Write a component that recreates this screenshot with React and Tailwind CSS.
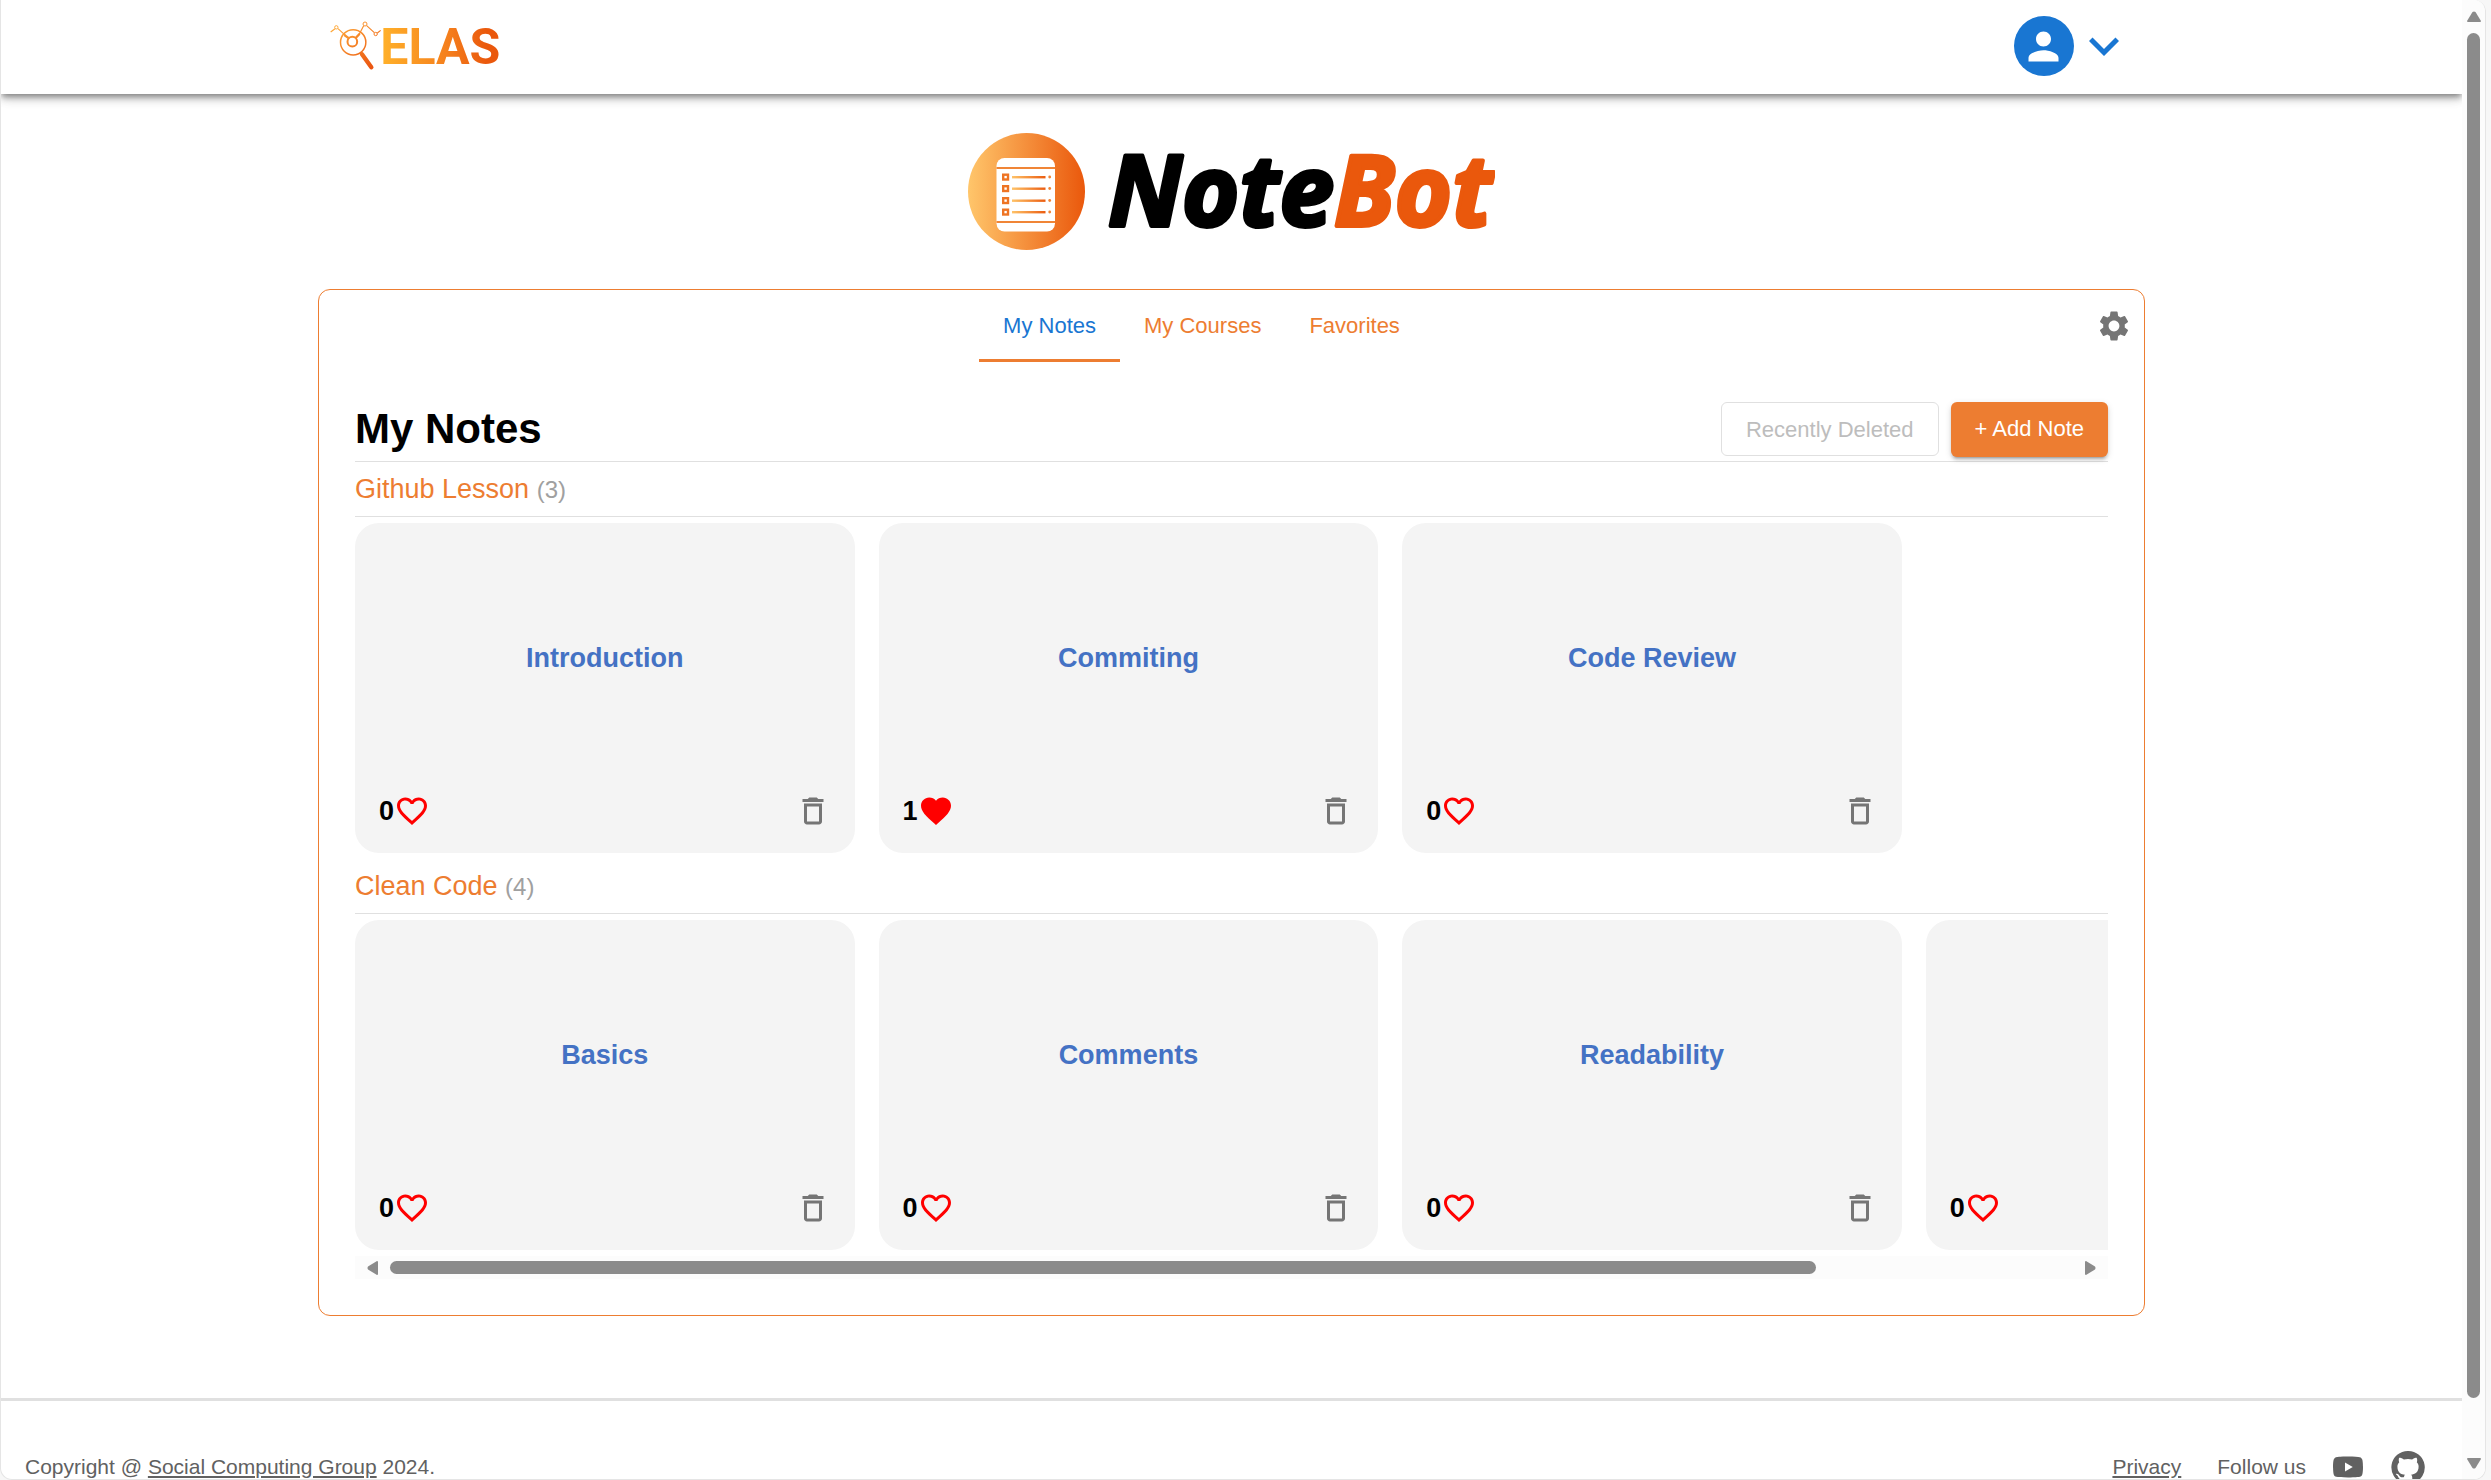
import React from "react";
import {
  MdPerson,
  MdKeyboardArrowDown,
  MdSettings,
  MdFavorite,
  MdFavoriteBorder,
  MdDeleteOutline,
} from "react-icons/md";

const sections = [
  {
    name: "Github Lesson",
    notes: [
      { title: "Introduction", likes: 0 },
      { title: "Commiting", likes: 1 },
      { title: "Code Review", likes: 0 },
    ],
  },
  {
    name: "Clean Code",
    scroll: true,
    notes: [
      { title: "Basics", likes: 0 },
      { title: "Comments", likes: 0 },
      { title: "Readability", likes: 0 },
      { title: "", likes: 0 },
    ],
  },
];

function ElasLogo() {
  return (
    <svg viewBox="88 30 540 216" className="h-[72px] w-[180px]" role="img" aria-label="ELAS">
      <defs>
        <linearGradient id="elasText" gradientUnits="userSpaceOnUse" x1="247" y1="0" x2="595" y2="0">
          <stop offset="0" stopColor="#ffb02a" />
          <stop offset="0.55" stopColor="#f5801d" />
          <stop offset="0.9" stopColor="#ea580c" />
        </linearGradient>
        <linearGradient id="elasIcon" gradientUnits="userSpaceOnUse" x1="110" y1="70" x2="215" y2="205">
          <stop offset="0" stopColor="#ffac3a" />
          <stop offset="1" stopColor="#ea5410" />
        </linearGradient>
      </defs>
      <g fill="none" stroke="url(#elasIcon)" strokeWidth="4">
        <circle cx="157.500" cy="127" r="38" strokeWidth="4.500" />
        <circle cx="155" cy="125" r="14.500" strokeWidth="6" />
        <circle cx="107" cy="82" r="5" strokeWidth="3" />
        <circle cx="193" cy="72" r="6" strokeWidth="3" />
        <circle cx="225" cy="102" r="5" strokeWidth="3" />
        <path d="M90 96l13-10M112 86l23 21M176 102l13-25M198 77l23 21M230 99l10-8" strokeWidth="3.500" />
        <path d="M131 105l15 11M165 114l12-13" strokeWidth="7" />
        <path d="M179 157l7 10" strokeWidth="8" />
        <path d="M184 163l28 39" strokeWidth="13" strokeLinecap="round" />
      </g>
      <text x="239" y="191" fontFamily="Roboto, sans-serif" fontWeight="700" fontSize="150" fill="url(#elasText)">
        ELAS
      </text>
    </svg>
  );
}

function NoteBotLogo() {
  return (
    <svg viewBox="968 113 527 157" className="h-[157px] w-[527px]" role="img" aria-label="NoteBot">
      <defs>
        <linearGradient id="disc" x1="0" x2="1" y1="0" y2="0">
          <stop offset="0" stopColor="#ffc66b" />
          <stop offset="1" stopColor="#ea580c" />
        </linearGradient>
        <linearGradient id="rule" gradientUnits="userSpaceOnUse" x1="1011" x2="1047" y1="0" y2="0">
          <stop offset="0" stopColor="#ffc66b" />
          <stop offset="1" stopColor="#ea580c" />
        </linearGradient>
      </defs>
      <circle cx="1026.500" cy="191.500" r="58.500" fill="url(#disc)" />
      <rect x="996.500" y="158" width="58.500" height="73.500" rx="8" fill="#fff" />
      <rect x="996.500" y="167" width="58.500" height="2" fill="#f08536" />
      <rect x="996.500" y="221" width="58.500" height="2" fill="#f08536" />
      {[177, 188.5, 200.5, 212].map((y) => (
        <g key={y}>
          <rect x="1003.200" y={y - 2.3} width="4.800" height="4.800" fill="#fff" stroke="#ee7424" strokeWidth="2.400" />
          <rect x="1012" y={y - 1} width="33.500" height="2.400" fill="url(#rule)" />
          <circle cx="1049.700" cy={y} r="1.400" fill="#f08536" />
        </g>
      ))}
      <g
        fontFamily="'Open Sans', sans-serif"
        fontWeight="700"
        fontStyle="italic"
        fontSize="98"
        strokeWidth="4"
        strokeLinejoin="round"
      >
        <text x="1108" y="226" fill="#000" stroke="#000">
          Note
        </text>
        <text x="1334" y="226" fill="#ea580c" stroke="#ea580c">
          Bot
        </text>
      </g>
    </svg>
  );
}

function NoteCard({ title, likes }) {
  return (
    <article className="flex h-[330px] w-[28.5%] shrink-0 flex-col rounded-[24px] bg-[#f4f4f4] px-6 pb-6">
      <h3 className="mt-[119px] text-center text-[27px] leading-8 font-bold text-[#4472c4]">{title}</h3>
      <div className="mt-auto flex items-center justify-between">
        <div className="flex items-center text-[27px] leading-9 font-bold">
          {likes}
          <button type="button" aria-label={"Like " + title} className="text-[#ff0000]">
            {likes > 0 ? <MdFavorite size={36} /> : <MdFavoriteBorder size={36} />}
          </button>
        </div>
        <button type="button" aria-label={"Delete " + title} className="text-[#757575]">
          <MdDeleteOutline size={36} />
        </button>
      </div>
    </article>
  );
}

function HorizontalScrollbar() {
  return (
    <div className="flex h-[23px] items-center bg-[#fcfcfc] px-3" aria-hidden="true">
      <svg viewBox="0 0 11 14" className="h-[14px] w-[11px] fill-[#8b8b8b]">
        <path d="M10 0q1 0 1 1v12q0 1-1 1L1 8.500q-1-1.500 0-3z" />
      </svg>
      <div className="mx-3 flex flex-1">
        <div className="h-[13px] w-[84.7%] rounded-full bg-[#8b8b8b]" />
      </div>
      <svg viewBox="0 0 11 14" className="h-[14px] w-[11px] fill-[#8b8b8b]">
        <path d="M1 0Q0 0 0 1v12q0 1 1 1l9-5.500q1-1.500 0-3z" />
      </svg>
    </div>
  );
}

function VerticalScrollbar() {
  return (
    <div className="flex w-[23px] shrink-0 flex-col items-center bg-[#fcfcfc] pt-[11px] pb-[10px]" aria-hidden="true">
      <svg viewBox="0 0 14 11" className="h-[11px] w-[14px] fill-[#8b8b8b]">
        <path d="M0 10q0 1 1 1h12q1 0 1-1L8.500 1q-1.500-1-3 0z" />
      </svg>
      <div className="my-[11px] flex-1">
        <div className="h-[96.5%] w-[13px] rounded-full bg-[#8b8b8b]" />
      </div>
      <svg viewBox="0 0 14 11" className="h-[11px] w-[14px] fill-[#8b8b8b]">
        <path d="M0 1q0-1 1-1h12q1 0 1 1l-5.500 9q-1.500 1-3 0z" />
      </svg>
    </div>
  );
}

const tabs = ["My Notes", "My Courses", "Favorites"];

export default function App() {
  return (
    <div className="h-screen overflow-hidden bg-[#f7f7f7] pr-[5px] font-['Liberation_Sans',Arial,sans-serif] text-black">
      <div className="flex h-full overflow-hidden rounded-r-[12px] rounded-bl-[12px] border-x border-b border-[#e5e5e5] bg-white">
        <div className="min-w-0 flex-1 overflow-hidden">
          <header className="relative h-[94px] bg-white shadow-[0_3px_6px_-1px_rgba(0,0,0,0.4),0_6px_8px_0_rgba(0,0,0,0.14),0_1px_15px_0_rgba(0,0,0,0.12)]">
            <div className="mx-auto flex h-full max-w-[1804px] items-center justify-between pb-0.5">
              <a href="#home">
                <ElasLogo />
              </a>
              <button type="button" aria-label="Account menu" className="flex items-center text-[#1976d2]">
                <span className="flex h-[60px] w-[60px] items-center justify-center rounded-full bg-[#1976d2] text-white">
                  <MdPerson size={45} />
                </span>
                <MdKeyboardArrowDown size={60} />
              </button>
            </div>
          </header>

          <main>
            <h1 className="flex justify-center py-[19px]">
              <NoteBotLogo />
            </h1>

            <section className="mx-auto max-w-[1827px] rounded-[12px] border border-[#ed7d31]">
              <div className="flex h-[72px] items-center">
                <nav className="flex h-full flex-1 justify-center">
                  {tabs.map((t, i) => (
                    <button
                      key={t}
                      type="button"
                      className={
                        i === 0
                          ? "h-full border-b-[3px] border-[#ed7d31] px-6 pt-0.5 text-[22px] text-[#1976d2]"
                          : "h-full border-b-[3px] border-transparent px-6 pt-0.5 text-[22px] text-[#ed7d31]"
                      }
                    >
                      {t}
                    </button>
                  ))}
                </nav>
                <button type="button" aria-label="Settings" className="flex w-[60px] justify-center text-[#757575]">
                  <MdSettings size={36} />
                </button>
              </div>

              <div className="px-9 pt-10 pb-9">
                <div className="flex h-[60px] items-start justify-between border-b border-[#e0e0e0]">
                  <h2 className="text-[42px] leading-[54px] font-bold">My Notes</h2>
                  <div className="flex items-start gap-3">
                    <button
                      type="button"
                      disabled
                      className="h-[54px] rounded-md border border-[#e0e0e0] px-6 text-[22px] text-[#bdbdbd]"
                    >
                      Recently Deleted
                    </button>
                    <button
                      type="button"
                      className="h-[55px] rounded-md bg-[#ed7d31] px-6 pb-0.5 text-[22px] text-white shadow-[0_4px_2px_-3px_rgba(0,0,0,0.2),0_3px_3px_0_rgba(0,0,0,0.14),0_2px_7px_0_rgba(0,0,0,0.12)]"
                    >
                      + Add Note
                    </button>
                  </div>
                </div>

                {sections.map((s) => (
                  <section key={s.name}>
                    <div className="h-[55px] border-b border-[#e0e0e0] text-[27px] leading-[54px] text-[#ed7d31]">
                      {s.name} <span className="text-[24px] text-[#a0a0a0]">({s.notes.length})</span>
                    </div>
                    <div className="flex gap-6 overflow-hidden py-1.5">
                      {s.notes.map((n, i) => (
                        <NoteCard key={i} title={n.title} likes={n.likes} />
                      ))}
                    </div>
                    {s.scroll && <HorizontalScrollbar />}
                  </section>
                ))}
              </div>
            </section>
          </main>

          <footer className="mt-[82px] flex items-center justify-between border-t-[3px] border-[#e0e0e0] pt-12 pr-9 pl-6 text-[21px] leading-9 text-[#616161]">
            <p>
              Copyright @{" "}
              <a href="#group" className="underline">
                Social Computing Group
              </a>{" "}
              2024.
            </p>
            <div className="flex items-center">
              <a href="#privacy" className="mr-9 underline">
                Privacy
              </a>
              <span className="mr-6">Follow us</span>
              <a href="#youtube" aria-label="YouTube" className="mr-6">
                <svg viewBox="0 0 24 24" className="h-9 w-9 fill-current">
                  <path d="M10 15l5.190-3L10 9v6m11.560-7.830c.13.470.22 1.100.28 1.900.07.800.1 1.490.1 2.090L22 12c0 2.190-.16 3.800-.44 4.830-.25.900-.83 1.480-1.730 1.730-.47.130-1.330.220-2.650.280-1.300.070-2.490.100-3.590.100L12 19c-4.190 0-6.800-.16-7.830-.44-.9-.25-1.480-.83-1.730-1.730-.13-.47-.22-1.100-.28-1.900-.07-.8-.1-1.490-.1-2.090L2 12c0-2.190.16-3.800.44-4.830.25-.9.83-1.480 1.730-1.730.47-.13 1.330-.22 2.650-.28 1.300-.07 2.490-.1 3.590-.1L12 5c4.190 0 6.800.16 7.830.44.9.25 1.480.83 1.730 1.730z" />
                </svg>
              </a>
              <a href="#github" aria-label="GitHub">
                <svg viewBox="0 0 24 24" className="h-9 w-9 fill-current">
                  <path d="M12 1.270a11 11 0 00-3.480 21.460c.55.090.73-.28.73-.55v-1.840c-3.030.640-3.670-1.460-3.670-1.460-.55-1.290-1.280-1.650-1.280-1.650-.92-.65.1-.65.1-.65 1.100 0 1.730 1.100 1.730 1.100.92 1.650 2.570 1.200 3.210.92a2 2 0 01.64-1.470c-2.470-.27-5.040-1.190-5.040-5.500 0-1.100.46-2.100 1.200-2.840a3.760 3.760 0 010-2.930s.91-.28 3.110 1.100c1.800-.49 3.700-.49 5.500 0 2.100-1.380 3.020-1.100 3.020-1.100a3.760 3.760 0 01.1 2.930c.83.740 1.200 1.740 1.200 2.940 0 4.210-2.570 5.130-5.040 5.400.45.370.82.920.82 2.020v3.030c0 .27.1.640.73.550A11 11 0 0012 1.270" />
                </svg>
              </a>
            </div>
          </footer>
        </div>
        <VerticalScrollbar />
      </div>
    </div>
  );
}
